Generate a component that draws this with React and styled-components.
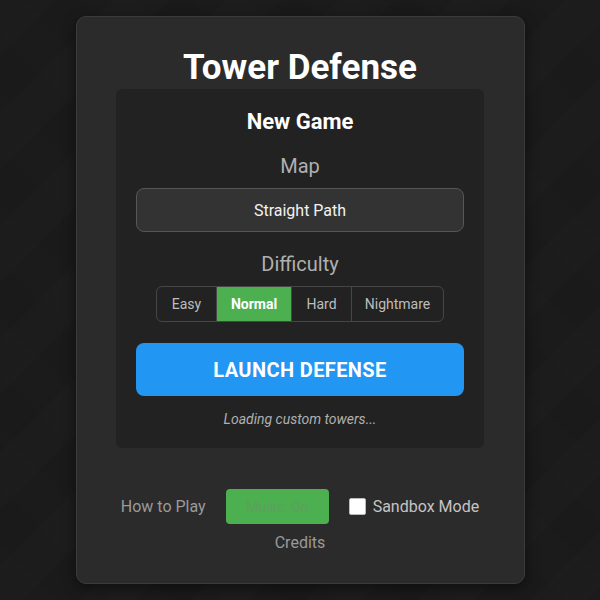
import React, { useState } from "react";
import styled, { createGlobalStyle } from "styled-components";

const Global = createGlobalStyle`
  html, body { margin: 0; padding: 0; }
  body {
    background-color: #1a1a1a;
    background-image:
      repeating-linear-gradient(135deg, rgba(255,255,255,0.006) 0 40px, rgba(0,0,0,0.015) 40px 80px),
      repeating-linear-gradient(45deg, rgba(255,255,255,0.005) 0 40px, rgba(0,0,0,0.01) 40px 80px);
    font-family: Roboto, "Liberation Sans", Arial, sans-serif;
    color: #fff;
  }
  #root { min-height: 600px; }
`;

const Page = styled.div`
  display: flex;
  justify-content: center;
  padding-top: 16px;
`;

const Card = styled.div`
  width: 449px;
  height: 568px;
  box-sizing: border-box;
  background: #2b2b2b;
  border: 1px solid #3b3b3b;
  border-radius: 10px;
  padding: 30px 40px 0;
  display: flex;
  flex-direction: column;
  align-items: center;
  box-shadow: 0 4px 14px rgba(0,0,0,0.45);
`;

const Title = styled.h1`
  margin: 0;
  font-size: 35px;
  line-height: 42px;
  font-weight: 700;
  color: #fff;
`;

const Panel = styled.div`
  width: 368px;
  box-sizing: border-box;
  background: #222222;
  border-radius: 6px;
  padding: 20px 20px 21px;
  display: flex;
  flex-direction: column;
  align-items: center;
`;

const PanelTitle = styled.h2`
  margin: 0;
  font-size: 22px;
  line-height: 26px;
  font-weight: 700;
  color: #fff;
`;

const Label = styled.div`
  font-size: 20px;
  line-height: 23px;
  color: #b0b0b0;
  margin-top: ${(p) => p.$mt}px;
  margin-bottom: 10px;
`;

const Select = styled.div`
  width: 328px;
  height: 44px;
  box-sizing: border-box;
  background: #333333;
  border: 1px solid #575757;
  border-radius: 8px;
  display: flex;
  align-items: center;
  justify-content: center;
  font-size: 16px;
  color: #f2f2f2;
`;

const Segments = styled.div`
  display: flex;
  height: 36px;
  box-sizing: border-box;
  border: 1px solid #464646;
  border-radius: 6px;
  overflow: hidden;
`;

const Segment = styled.button`
  width: ${(p) => p.$w}px;
  border: none;
  border-left: ${(p) => (p.$first ? "none" : "1px solid #464646")};
  background: ${(p) => (p.$active ? "#4caf50" : "transparent")};
  color: ${(p) => (p.$active ? "#fff" : "#bdbdbd")};
  font-family: inherit;
  font-size: 14px;
  font-weight: ${(p) => (p.$active ? 700 : 400)};
  padding: 0;
  cursor: pointer;
`;

const Launch = styled.button`
  margin-top: 21px;
  width: 328px;
  height: 53px;
  border: none;
  border-radius: 8px;
  background: #2196f3;
  color: #fff;
  font-family: inherit;
  font-size: 20px;
  letter-spacing: 0.4px;
  font-weight: 700;
  cursor: pointer;
`;

const Status = styled.div`
  margin-top: 15px;
  font-size: 14px;
  line-height: 16px;
  font-style: italic;
  color: #b0b0b0;
`;

const Footer = styled.div`
  margin-top: 41px;
  display: flex;
  flex-direction: column;
  align-items: center;
  gap: 9px;
`;

const FooterRow = styled.div`
  display: flex;
  align-items: center;
  gap: 20px;
`;

const TextLink = styled.span`
  font-size: 16px;
  line-height: 19px;
  color: #9a9a9a;
  cursor: pointer;
`;

const MusicButton = styled.button`
  width: 103px;
  height: 35px;
  border: none;
  border-radius: 4px;
  background: #4caf50;
  color: #5c9f5f;
  font-family: inherit;
  font-size: 14px;
  cursor: pointer;
`;

const CheckLabel = styled.label`
  display: flex;
  align-items: center;
  gap: 7px;
  font-size: 16px;
  color: #c4c4c4;
`;

const Box = styled.span`
  width: 15px;
  height: 15px;
  background: #fff;
  border: 1px solid #bbb;
  border-radius: 2px;
`;

const levels = [
  { name: "Easy", w: 59 },
  { name: "Normal", w: 75 },
  { name: "Hard", w: 60 },
  { name: "Nightmare", w: 92 },
];

export default function App() {
  const [level, setLevel] = useState("Normal");
  return (
    <>
      <Global />
      <Page>
        <Card>
          <Title>Tower Defense</Title>
          <Panel>
            <PanelTitle>New Game</PanelTitle>
            <Label $mt={20}>Map</Label>
            <Select>Straight Path</Select>
            <Label $mt={21}>Difficulty</Label>
            <Segments>
              {levels.map((l, i) => (
                <Segment
                  key={l.name}
                  $w={l.w}
                  $first={i === 0}
                  $active={level === l.name}
                  onClick={() => setLevel(l.name)}
                >
                  {l.name}
                </Segment>
              ))}
            </Segments>
            <Launch>LAUNCH DEFENSE</Launch>
            <Status>Loading custom towers...</Status>
          </Panel>
          <Footer>
            <FooterRow>
              <TextLink>How to Play</TextLink>
              <MusicButton>Music: On</MusicButton>
              <CheckLabel>
                <Box />
                Sandbox Mode
              </CheckLabel>
            </FooterRow>
            <TextLink>Credits</TextLink>
          </Footer>
        </Card>
      </Page>
    </>
  );
}
